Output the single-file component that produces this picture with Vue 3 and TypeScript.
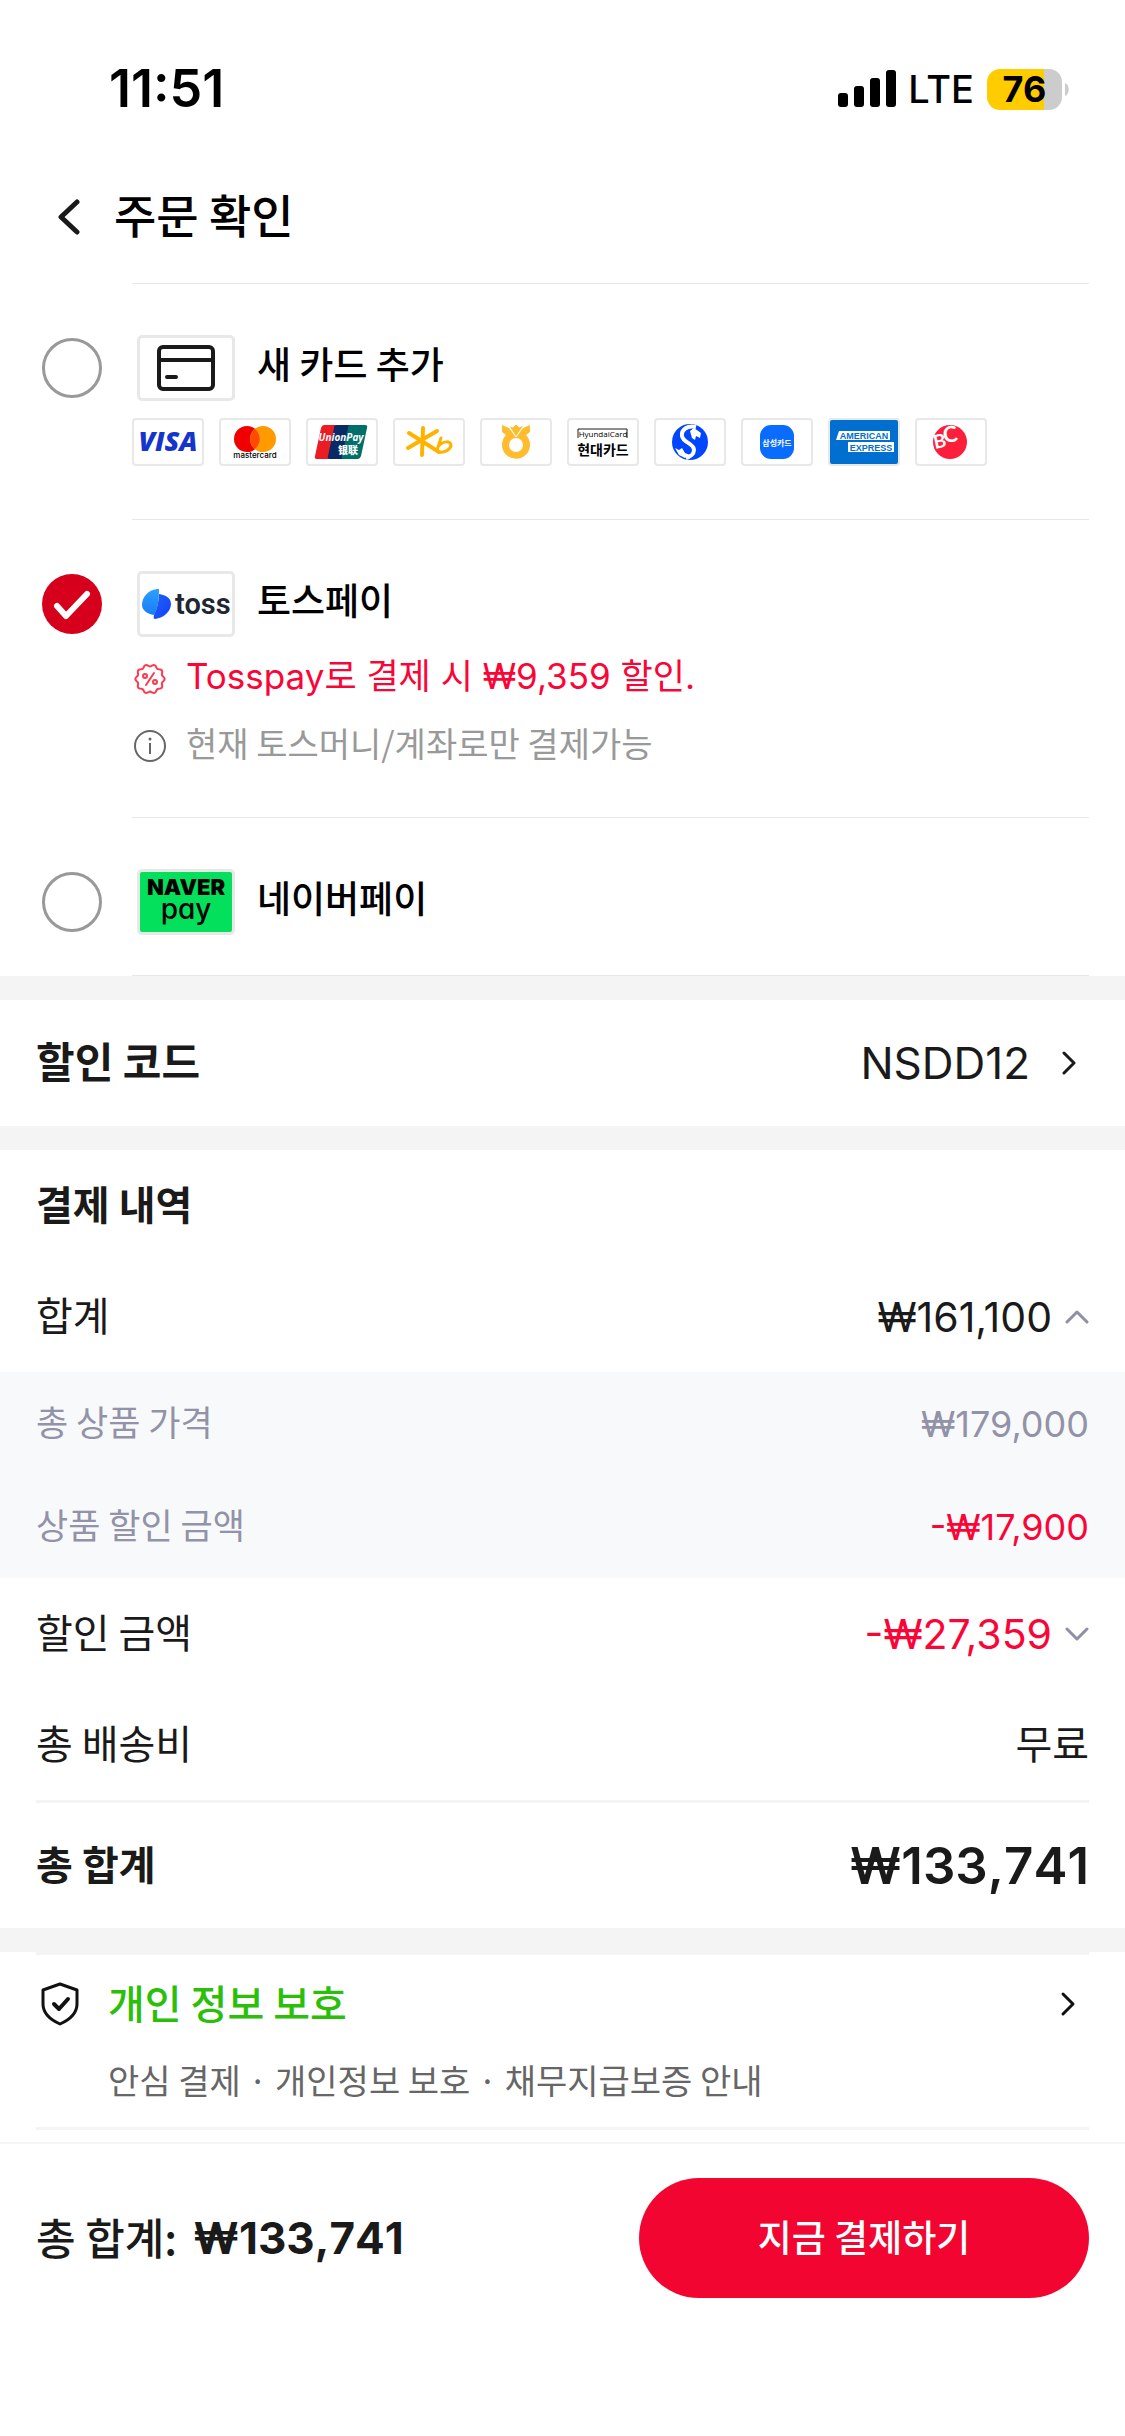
<script setup lang="ts">
import { ref } from 'vue'

type MethodId = 'card' | 'toss' | 'naver'

interface Method {
  id: MethodId
  name: string
}

const methods: Method[] = [
  { id: 'card', name: '새 카드 추가' },
  { id: 'toss', name: '토스페이' },
  { id: 'naver', name: '네이버페이' },
]

const selected = ref<MethodId>('toss')
const subtotalOpen = ref(true)
const discountOpen = ref(false)

// Scalloped outline of the discount badge, centred on 16,16.
const badgePath = (() => {
  const points: string[] = []
  for (let i = 0; i < 120; i++) {
    const a = (i / 120) * Math.PI * 2
    const r = 13.6 + Math.cos(a * 10 + Math.PI) * 1
    points.push(`${(16 + r * Math.sin(a)).toFixed(2)} ${(16 - r * Math.cos(a)).toFixed(2)}`)
  }
  return `M${points.join('L')}Z`
})()
</script>

<template>
  <div class="page">
    <div class="status">
      <span class="clock">11:51</span>
      <div class="status-right">
        <svg class="signal" width="58" height="38" viewBox="0 0 58 38" aria-hidden="true">
          <rect x="0" y="23" width="10" height="14" rx="3" />
          <rect x="16" y="16" width="10" height="21" rx="3" />
          <rect x="32" y="8" width="10" height="29" rx="3" />
          <rect x="48" y="0" width="10" height="37" rx="3" />
        </svg>
        <span class="network">LTE</span>
        <div class="battery"><span>76</span></div>
        <svg width="4" height="13" viewBox="0 0 4 13" aria-hidden="true"><path d="M0 0C5 2 5 11 0 13Z" fill="#ccc" /></svg>
      </div>
    </div>

    <header class="nav">
      <button class="back" type="button" aria-label="뒤로">
        <svg width="22" height="36" viewBox="0 0 22 36"><path d="M19 3L3 18L19 33" fill="none" stroke="#1a1a1a" stroke-width="5" stroke-linecap="round" stroke-linejoin="round" /></svg>
      </button>
      <h1>주문 확인</h1>
    </header>

    <ul class="methods">
      <li v-for="m in methods" :key="m.id" class="method">
        <div class="pick">
          <input :id="'pay-' + m.id" v-model="selected" type="radio" name="pay" :value="m.id" />
          <svg v-if="selected === m.id" width="60" height="60" viewBox="0 0 60 60" aria-hidden="true"><path d="M15 32L24 42L45 20" fill="none" stroke="#fff" stroke-width="6" stroke-linecap="round" stroke-linejoin="round" /></svg>
        </div>
        <div class="method-body" :class="'body-' + m.id">
          <label class="method-head" :for="'pay-' + m.id">
            <span class="logo" :class="'logo-' + m.id">
              <svg v-if="m.id === 'card'" width="58" height="46" viewBox="0 0 58 46" aria-hidden="true">
                <g fill="none" stroke="#1a1a1a" stroke-width="4">
                  <rect x="2" y="2" width="54" height="42" rx="4" />
                  <path d="M2 15H56" />
                  <path d="M10 32H19" stroke-linecap="round" />
                </g>
              </svg>
              <svg v-else-if="m.id === 'toss'" width="94" height="62" viewBox="0 0 94 62" role="img" aria-label="toss">
                <defs>
                  <linearGradient id="tossA" x1="0" y1="0" x2="0" y2="1"><stop offset="0" stop-color="#2ba0ff" /><stop offset="1" stop-color="#1a7cf5" /></linearGradient>
                  <linearGradient id="tossB" x1="0" y1="0" x2="1" y2="1"><stop offset="0" stop-color="#1c63f0" /><stop offset="1" stop-color="#1440ff" /></linearGradient>
                </defs>
                <path d="M20 16C20 26 19 35 15 42C8 41 3 37 3 32C3 24 9 17 18 16Z" fill="url(#tossA)" />
                <path d="M20 21C27 22 32 25 32 31C32 38 25 45 16 46Q14 46 15 42C18 36 20 28 20 21Z" fill="url(#tossB)" />
                <text x="36" y="41" class="toss-word">toss</text>
              </svg>
              <svg v-else width="94" height="62" viewBox="0 0 94 62" role="img" aria-label="NAVER pay">
                <text text-anchor="middle">
                  <tspan x="47" y="24" class="naver-word">NAVER</tspan>
                  <tspan x="47" y="48" class="pay-word">pay</tspan>
                </text>
              </svg>
            </span>
            <span class="method-name">{{ m.name }}</span>
          </label>

          <ul v-if="m.id === 'card'" class="brands">
            <li>
              <svg viewBox="0 0 68 44"><text x="34" y="31" text-anchor="middle" class="t-visa">VISA</text></svg>
            </li>
            <li>
              <svg viewBox="0 0 68 44">
                <circle cx="26" cy="19" r="13" fill="#f00000" />
                <circle cx="42" cy="19" r="13" fill="#ff9a00" />
                <path d="M34 9A13 13 0 0 1 34 29A13 13 0 0 1 34 9Z" fill="#ff4a00" />
                <text x="34" y="38" text-anchor="middle" class="t-master">mastercard</text>
              </svg>
            </li>
            <li>
              <svg viewBox="0 0 68 44">
                <path d="M16 5H30L22 39H9Q6 39 7 36L13 8Q14 5 16 5Z" fill="#ec1c24" />
                <path d="M28 5H44L36 39H22Q19 39 20 36L26 8Q26 5 28 5Z" fill="#0a2a66" />
                <path d="M42 5H57Q60 5 59 8L53 36Q52 39 50 39H35Q33 39 34 36L40 8Q40 5 42 5Z" fill="#006f6a" />
                <text x="33" y="21" text-anchor="middle" class="t-union">UnionPay</text>
                <text x="40" y="34" text-anchor="middle" class="t-union-cn">银联</text>
              </svg>
            </li>
            <li>
              <svg viewBox="0 0 68 44">
                <g fill="none" stroke="#ffb300" stroke-width="4" stroke-linecap="round" stroke-linejoin="round">
                  <path d="M28 8L27 35M14 13L44 32M42 11L13 28" />
                  <path d="M46 18L42 30M43 27C48 20 56 21 56 25C56 29 50 33 44 32" stroke-width="3" />
                </g>
              </svg>
            </li>
            <li>
              <svg viewBox="0 0 68 44">
                <path d="M20 5L27 8L34 17L41 8L48 5V12L44 15A14 14 0 1 1 24 15L20 12Z" fill="#ffbc2e" />
                <circle cx="34" cy="25" r="7" fill="#fff" />
                <path d="M27 6L31 7L34 4L37 7L42 5L34 17Z" fill="#ffbc2e" stroke="#fff" />
              </svg>
            </li>
            <li>
              <svg viewBox="0 0 68 44">
                <path d="M9 18V9H58V18" fill="none" stroke="#1d1d1f" />
                <text x="34" y="17" text-anchor="middle" class="t-hyundai">HyundaiCard</text>
                <text x="34" y="35" text-anchor="middle" class="t-hyundai-kr">현대카드</text>
              </svg>
            </li>
            <li>
              <svg viewBox="0 0 68 44">
                <circle cx="34" cy="22" r="18" fill="#0046ff" />
                <path d="M40 7C31 5 25 10 26 16C27 23 38 23 38 30C38 34 34 37 30 38" fill="none" stroke="#fff" stroke-width="4" />
                <path d="M34 11L38 8L45 13L44 18L40 16L39 20L36 18Z" fill="#fff" />
                <path d="M19 28L23 30L26 28L29 33L34 35L29 38L23 35Z" fill="#fff" />
              </svg>
            </li>
            <li>
              <svg viewBox="0 0 68 44">
                <rect x="17" y="5" width="34" height="34" rx="11" fill="#0a6cff" />
                <text x="34" y="26" text-anchor="middle" class="t-samsung">삼성카드</text>
              </svg>
            </li>
            <li class="brand-amex">
              <svg viewBox="0 0 68 44">
                <path d="M9 11H60V20H6Z" fill="#fff" />
                <rect x="18" y="22" width="46" height="10" fill="#fff" />
                <text x="34" y="19" text-anchor="middle" class="t-amex">AMERICAN</text>
                <text x="41" y="31" text-anchor="middle" class="t-amex">EXPRESS</text>
              </svg>
            </li>
            <li>
              <svg viewBox="0 0 68 44">
                <circle cx="33" cy="22" r="17" fill="#fb1f3b" />
                <text x="18" y="29" class="t-bc-b" transform="rotate(-12 18 29)">B</text>
                <text x="27" y="23" class="t-bc-c" transform="rotate(-8 27 23)">C</text>
              </svg>
            </li>
          </ul>

          <div v-if="m.id === 'toss'" class="notes">
            <p class="note note-red">
              <svg width="32" height="32" viewBox="0 0 32 32" aria-hidden="true">
                <g fill="none" stroke="#ff3a50" stroke-width="2" stroke-linecap="round">
                  <path :d="badgePath" />
                  <path d="M20 10L12 22" />
                  <circle cx="11" cy="13" r="2" />
                  <circle cx="21" cy="19" r="2" />
                </g>
              </svg>
              <span>Tosspay로 결제 시 ₩9,359 할인.</span>
            </p>
            <p class="note">
              <svg width="32" height="32" viewBox="0 0 32 32" aria-hidden="true">
                <circle cx="16" cy="16" r="15" fill="none" stroke="#666" stroke-width="2" />
                <path d="M16 13V24" stroke="#666" stroke-width="2" />
                <circle cx="16" cy="9" r="1.5" fill="#666" />
              </svg>
              <span>현재 토스머니/계좌로만 결제가능</span>
            </p>
          </div>
        </div>
      </li>
    </ul>

    <button class="coupon" type="button">
      <span class="coupon-label">할인 코드</span>
      <span class="coupon-code">NSDD12</span>
      <svg width="14" height="26" viewBox="0 0 14 26" aria-hidden="true"><path d="M2 3L12 13L2 23" fill="none" stroke="#1a1a1a" stroke-width="3" stroke-linecap="round" stroke-linejoin="round" /></svg>
    </button>

    <section class="summary">
      <h2>결제 내역</h2>
      <div class="row">
        <span class="row-label">합계</span>
        <button class="toggle" type="button" :aria-expanded="subtotalOpen" @click="subtotalOpen = !subtotalOpen">
          <span>₩161,100</span>
          <svg width="24" height="14" viewBox="0 0 24 14" aria-hidden="true"><path :d="subtotalOpen ? 'M2 12L12 2L22 12' : 'M2 2L12 12L22 2'" /></svg>
        </button>
      </div>
      <div v-if="subtotalOpen" class="details">
        <div class="row sub">
          <span class="row-label">총 상품 가격</span>
          <span class="amount">₩179,000</span>
        </div>
        <div class="row sub">
          <span class="row-label">상품 할인 금액</span>
          <span class="amount red">-₩17,900</span>
        </div>
      </div>
      <div class="row">
        <span class="row-label">할인 금액</span>
        <button class="toggle red" type="button" :aria-expanded="discountOpen" @click="discountOpen = !discountOpen">
          <span>-₩27,359</span>
          <svg width="24" height="14" viewBox="0 0 24 14" aria-hidden="true"><path :d="discountOpen ? 'M2 12L12 2L22 12' : 'M2 2L12 12L22 2'" /></svg>
        </button>
      </div>
      <div class="row">
        <span class="row-label">총 배송비</span>
        <span class="row-label">무료</span>
      </div>
      <div class="total">
        <span class="total-label">총 합계</span>
        <strong>₩133,741</strong>
      </div>
    </section>

    <section class="privacy">
      <a href="#privacy" class="privacy-link">
        <svg class="shield" width="48" height="48" viewBox="0 0 48 48" aria-hidden="true">
          <g fill="none" stroke="#111" stroke-width="3" stroke-linecap="round" stroke-linejoin="round">
            <path d="M24 4L41 10V24C41 34 33 40 24 44C15 40 7 34 7 24V10Z" />
            <path d="M18 24L23 29L32 19" stroke-width="4" />
          </g>
        </svg>
        <span class="privacy-title">개인 정보 보호</span>
        <svg width="16" height="28" viewBox="0 0 16 28" aria-hidden="true"><path d="M3 4L13 14L3 24" fill="none" stroke="#111" stroke-width="3" stroke-linecap="round" stroke-linejoin="round" /></svg>
      </a>
      <p>안심 결제 · 개인정보 보호 · 채무지급보증 안내</p>
    </section>

    <footer class="checkout">
      <div class="checkout-sum">
        <span>총 합계:</span>
        <strong>₩133,741</strong>
      </div>
      <button class="pay" type="button">지금 결제하기</button>
    </footer>
  </div>
</template>

<style>
body {
  margin: 0;
  background: #fff;
}
</style>

<style scoped>
.page {
  font-family: "Noto Sans CJK KR", sans-serif;
  color: #1a1a1a;
  background: #fff;
}
h1, h2, p, ul {
  margin: 0;
  padding: 0;
  font-weight: inherit;
}
ul {
  list-style: none;
}
button {
  border: 0;
  padding: 0;
  background: none;
  color: inherit;
  font: inherit;
  text-align: left;
}
svg {
  display: block;
  flex: none;
}

.status {
  display: flex;
  justify-content: space-between;
  align-items: center;
  box-sizing: border-box;
  height: 150px;
  padding: 28px 56px 0 109px;
  color: #000;
  font-family: Inter, sans-serif;
}
.clock {
  font-size: 52px;
  line-height: 60px;
  font-weight: 600;
}
.status-right {
  display: flex;
  align-items: center;
}
.network {
  margin: 0 13px 0 12px;
  font-size: 38px;
  line-height: 48px;
  font-weight: 500;
}
.battery {
  box-sizing: border-box;
  width: 75px;
  height: 41px;
  margin-right: 3px;
  border-radius: 13px;
  background: linear-gradient(90deg, #ffcc00 76%, #ccc 76%);
  font-size: 36px;
  line-height: 41px;
  font-weight: 700;
  text-align: center;
}

.nav {
  display: flex;
  align-items: center;
  height: 133px;
  padding-left: 58px;
  color: #000;
}
.nav h1 {
  margin-left: 34px;
  padding-bottom: 8px;
  font-size: 46px;
  line-height: 60px;
  font-weight: 500;
}

.method {
  display: flex;
  gap: 30px;
  padding: 0 36px 0 42px;
}
.pick {
  display: grid;
  flex: none;
  width: 60px;
  height: 60px;
  margin-top: 55px;
}
.pick > * {
  grid-area: 1 / 1;
}
.pick svg {
  z-index: 1;
  pointer-events: none;
}
.pick input {
  appearance: none;
  box-sizing: border-box;
  width: 60px;
  height: 60px;
  margin: 0;
  border: 3px solid #999;
  border-radius: 50%;
}
.pick input:checked {
  border: 0;
  background: #d6001c;
}
.method-body {
  flex: 1;
  min-width: 0;
  padding: 51px 0 40px;
  border-top: 1px solid #e8e8e8;
}
.method:last-child .method-body {
  border-bottom: 1px solid #e8e8e8;
}
.body-card {
  padding-bottom: 53px;
}
.body-toss {
  padding-bottom: 38px;
}
.method-head {
  display: flex;
  align-items: center;
  gap: 22px;
  height: 66px;
  margin-left: 5px;
}
.logo {
  display: flex;
  align-items: center;
  justify-content: center;
  box-sizing: border-box;
  width: 98px;
  height: 66px;
  border: 3px solid #e8e8e8;
  border-radius: 5px;
}
.logo-naver {
  background: #03e15c;
}
.toss-word {
  font: 600 29px Roboto, sans-serif;
  fill: #202632;
}
.naver-word {
  font: 900 22px Inter, sans-serif;
}
.pay-word {
  font: 500 28px Inter, sans-serif;
  font-feature-settings: "cv11";
}
.method-name {
  padding-bottom: 10px;
  color: #000;
  font-size: 37px;
  line-height: 54px;
  font-weight: 500;
}
.brands {
  display: flex;
  gap: 15px;
  margin-top: 17px;
}
.brands li {
  box-sizing: border-box;
  width: 72px;
  height: 48px;
  border: 2px solid #e8e8e8;
  border-radius: 4px;
}
.brands svg {
  overflow: visible;
}
.brands .brand-amex {
  background: #016fd0;
}
.t-visa {
  font: italic 800 27px "Open Sans", sans-serif;
  fill: #1434cb;
}
.t-master {
  font: 500 8px Inter, sans-serif;
}
.t-union {
  font: italic 700 10px "Open Sans", sans-serif;
  fill: #fff;
}
.t-union-cn {
  font: 900 10px "Noto Sans CJK SC", sans-serif;
  fill: #fff;
}
.t-hyundai {
  font: 500 8px "Open Sans", sans-serif;
}
.t-hyundai-kr {
  font: 700 14px "Noto Sans CJK KR", sans-serif;
}
.t-samsung {
  font: 700 8px "Noto Sans CJK KR", sans-serif;
  fill: #fff;
}
.t-amex {
  font: 800 9px "Liberation Sans", sans-serif;
  fill: #016fd0;
}
.t-bc-b {
  font: 700 19px Lato, sans-serif;
  fill: #fff;
}
.t-bc-c {
  font: 700 22px Lato, sans-serif;
  fill: #fff;
}

.notes {
  margin-top: 8px;
}
.note {
  display: flex;
  align-items: center;
  gap: 20px;
  height: 67px;
  padding-left: 2px;
  color: #999;
  font-size: 34px;
  line-height: 48px;
}
.note span {
  padding-bottom: 6px;
}
.note-red {
  color: #fa0537;
  font-family: Inter, "Noto Sans CJK KR", sans-serif;
  font-size: 35px;
}

.coupon {
  display: flex;
  align-items: center;
  box-sizing: content-box;
  width: 100%;
  height: 126px;
  border: solid #f4f4f4;
  border-width: 24px 0;
}
.coupon-label {
  flex: 1;
  padding: 0 0 6px 36px;
  font-size: 42px;
  line-height: 60px;
  font-weight: 700;
}
.coupon-code {
  font-family: Inter, sans-serif;
  font-size: 44px;
  line-height: 60px;
}
.coupon svg {
  margin: 0 49px 0 32px;
}

.summary h2 {
  padding: 25px 36px 30px;
  font-size: 40px;
  line-height: 56px;
  font-weight: 700;
}
.row {
  display: flex;
  align-items: center;
  justify-content: space-between;
  height: 111px;
  padding: 0 36px;
  font-size: 40px;
  line-height: 54px;
}
.row-label {
  padding-bottom: 6px;
}
.sub {
  height: 103px;
  color: #9292a8;
  font-size: 35px;
}
.details {
  background: #f8f9fb;
}
.toggle {
  display: flex;
  align-items: center;
  gap: 13px;
  font-family: Inter, sans-serif;
  font-size: 41px;
}
.toggle path {
  fill: none;
  stroke: #8f8fa6;
  stroke-width: 3;
  stroke-linecap: round;
  stroke-linejoin: round;
}
.amount {
  font-family: Inter, sans-serif;
  font-size: 36px;
}
.red {
  color: #fa0537;
}
.total {
  display: flex;
  align-items: center;
  justify-content: space-between;
  height: 125px;
  margin: 0 36px;
  border-top: 3px solid #f4f4f4;
}
.total-label {
  padding-bottom: 6px;
  font-size: 40px;
  line-height: 56px;
  font-weight: 700;
}
.total strong {
  font-family: Inter, sans-serif;
  font-size: 51px;
  line-height: 60px;
  font-weight: 600;
  font-kerning: none;
}

.privacy {
  padding: 0 36px 12px;
  border-top: 24px solid #f4f4f4;
}
.privacy-link {
  display: flex;
  align-items: center;
  height: 98px;
  border-top: 3px solid #f4f4f4;
  color: inherit;
  text-decoration: none;
}
.privacy-link > svg:last-child {
  margin-right: 13px;
}
.privacy-title {
  flex: 1;
  margin-left: 24px;
  padding-bottom: 4px;
  color: #2bbf0a;
  font-size: 40px;
  line-height: 56px;
  font-weight: 500;
}
.privacy p {
  padding: 3px 0 23px 72px;
  border-bottom: 3px solid #f4f4f4;
  color: #666;
  font-size: 34px;
  line-height: 48px;
}

.checkout {
  display: flex;
  align-items: center;
  justify-content: space-between;
  height: 188px;
  padding: 0 36px;
  border-top: 2px solid #f4f4f4;
}
.checkout-sum {
  display: flex;
  align-items: center;
  gap: 16px;
  font-size: 43px;
  line-height: 56px;
  font-weight: 500;
}
.checkout-sum span {
  padding-bottom: 4px;
}
.checkout-sum strong {
  font-family: Inter, sans-serif;
  font-size: 44px;
  font-weight: 700;
  font-kerning: none;
}
.pay {
  width: 450px;
  height: 120px;
  padding-bottom: 4px;
  border-radius: 60px;
  background: #f20530;
  color: #fff;
  font-size: 37px;
  font-weight: 500;
  text-align: center;
}
</style>
